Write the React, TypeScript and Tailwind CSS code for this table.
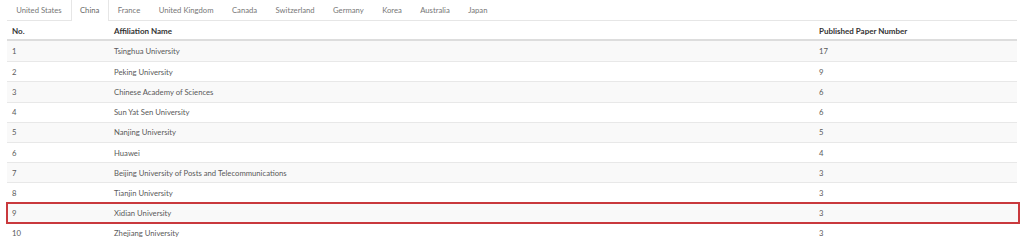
const tabs = ['United States', 'China', 'France', 'United Kingdom', 'Canada', 'Switzerland', 'Germany', 'Korea', 'Australia', 'Japan'];

const rows = [
  { no: 1, name: 'Tsinghua University', count: 17 },
  { no: 2, name: 'Peking University', count: 9 },
  { no: 3, name: 'Chinese Academy of Sciences', count: 6 },
  { no: 4, name: 'Sun Yat Sen University', count: 6 },
  { no: 5, name: 'Nanjing University', count: 5 },
  { no: 6, name: 'Huawei', count: 4 },
  { no: 7, name: 'Beijing University of Posts and Telecommunications', count: 3 },
  { no: 8, name: 'Tianjin University', count: 3 },
  { no: 9, name: 'Xidian University', count: 3 },
  { no: 10, name: 'Zhejiang University', count: 3 },
];

export default function App() {
  return (
    <div className="w-[1024px] h-[243px] overflow-hidden bg-white pl-[7px] pr-[7px] text-[#5a5a5a]" style={{ fontFamily: 'Lato, "Open Sans", sans-serif' }}>
      <div className="flex h-[21px] border-b border-[#e6e6e6] text-[7.7px] text-[#777]">
        {tabs.map(t => (
          <div
            key={t}
            className={t === 'China'
              ? 'px-[8.2px] pt-px flex items-center bg-white border-x border-[#e6e6e6] -mb-px text-[#666]'
              : 'px-[8.2px] pt-px flex items-center border-x border-transparent'}
          >
            {t}
          </div>
        ))}
      </div>

      <div className="grid grid-cols-[102px_705px_1fr] h-[20px] pt-px items-center border-b-2 border-[#ddd] text-[8px] font-bold text-[#333]">
        <div className="pl-[5px]">No.</div>
        <div className="pl-[5px]">Affiliation Name</div>
        <div className="pl-[5px]">Published Paper Number</div>
      </div>

      {rows.map((r, i) => (
        <div
          key={r.no}
          className={[
            'grid grid-cols-[102px_705px_1fr] h-[20.2px] pt-[1.5px] items-center text-[7.7px]',
            i > 0 ? 'border-t border-[#e8e8e8]' : '',
            i % 2 === 0 ? 'bg-[#f9f9f9]' : 'bg-white',
            r.no === 9 ? 'outline-2 outline-[#c9393d] -outline-offset-1 mr-[-2px]' : '',
          ].join(' ')}
        >
          <div className="pl-[5px]">{r.no}</div>
          <div className="pl-[5px]">{r.name}</div>
          <div className="pl-[5px]">{r.count}</div>
        </div>
      ))}
    </div>
  );
}
